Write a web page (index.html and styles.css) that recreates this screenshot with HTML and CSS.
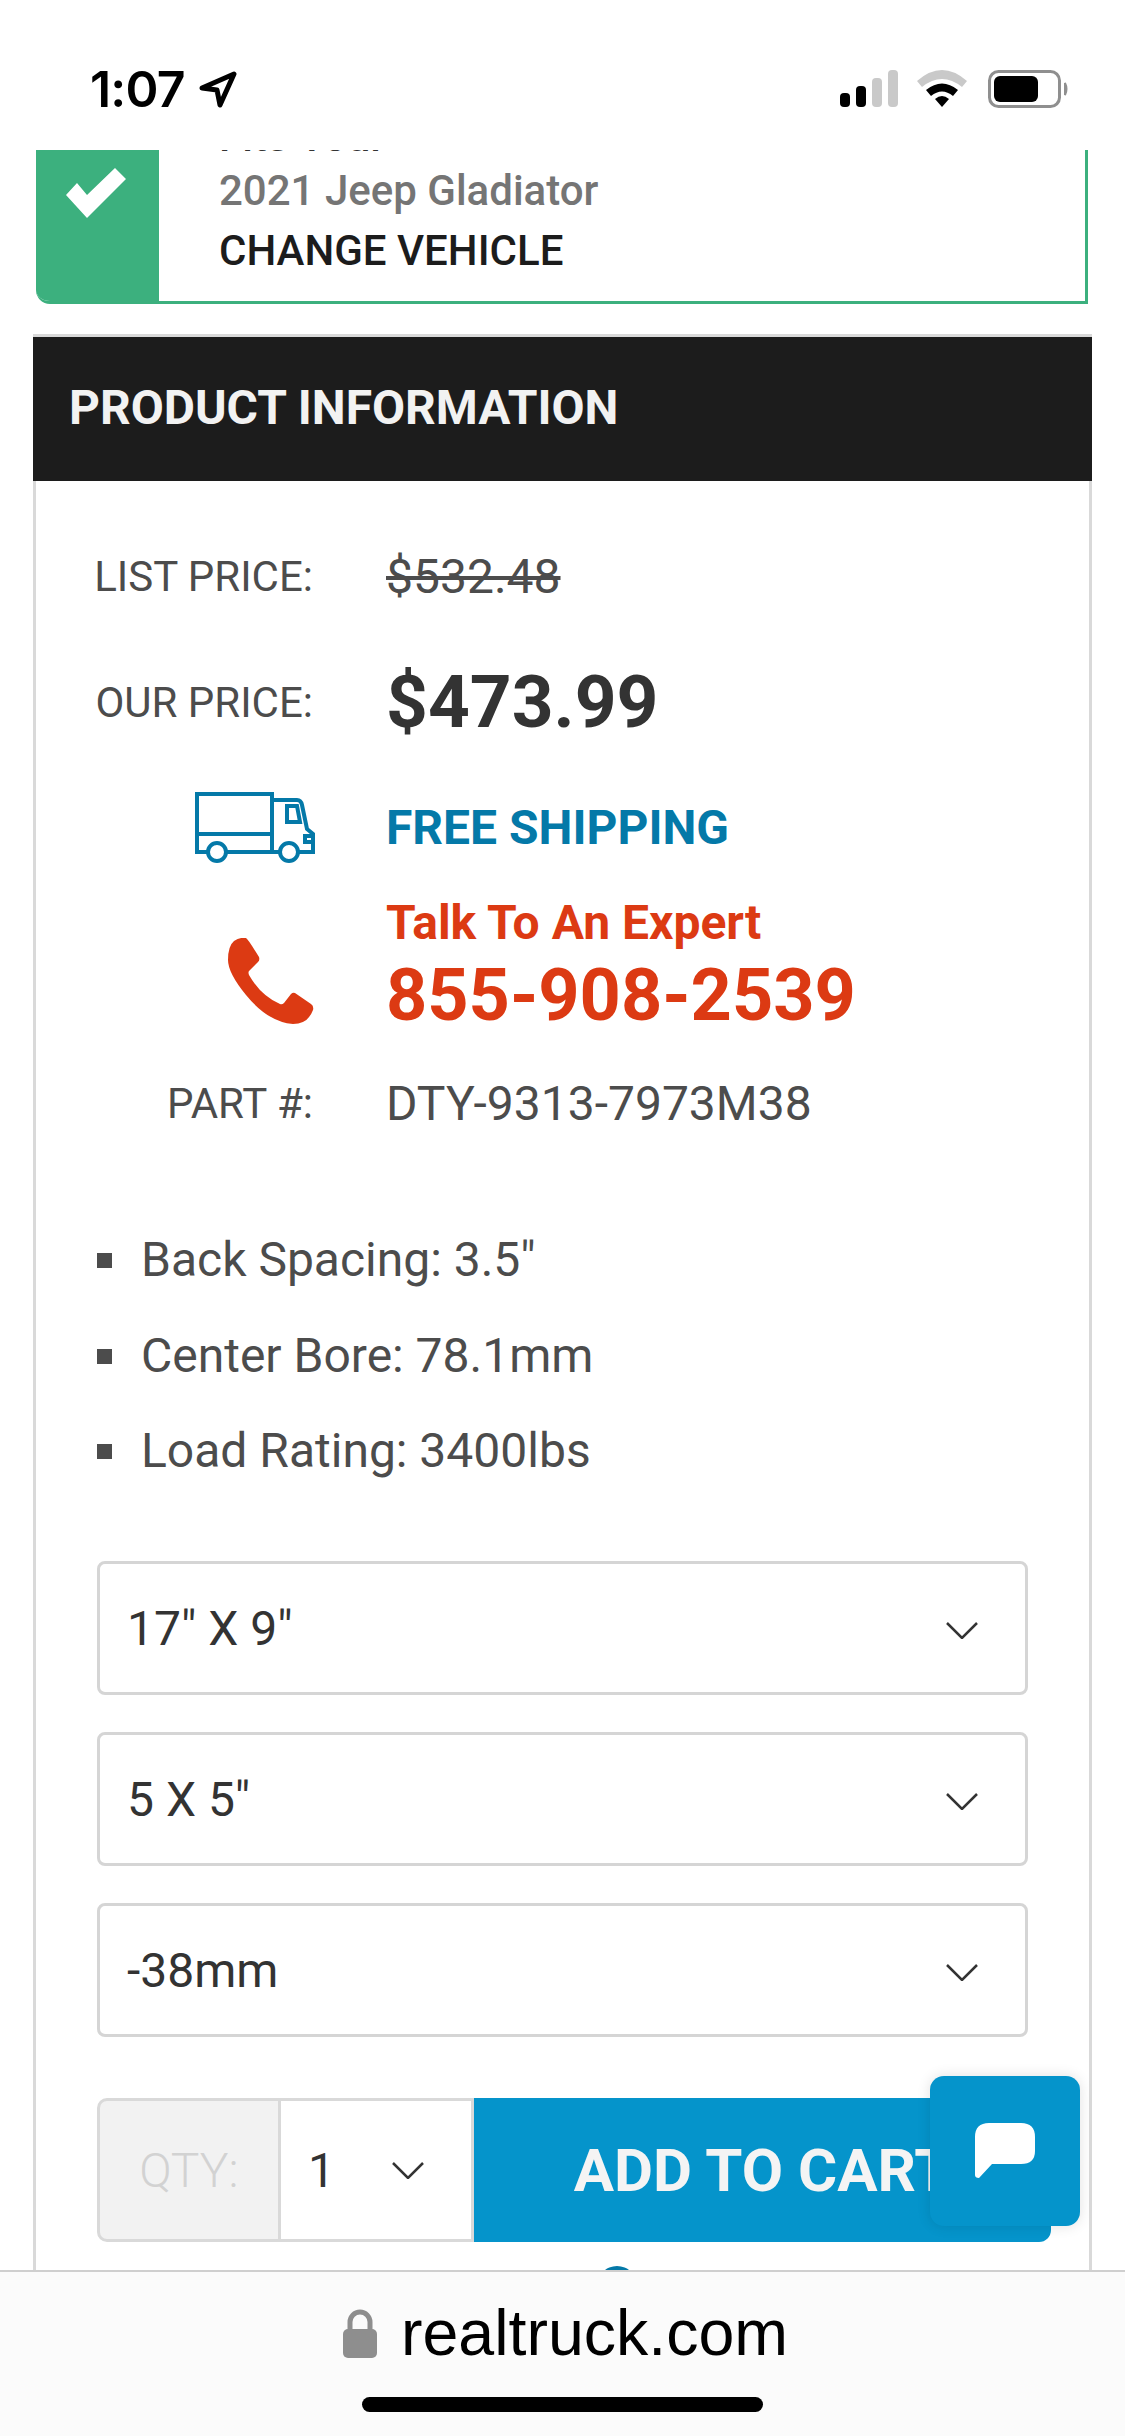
FILE: index.html
```html
<!DOCTYPE html>
<html lang="en">
<head>
<meta charset="utf-8">
<title>Product information</title>
<link rel="stylesheet" href="styles.css">
</head>
<body>
<div class="phone">
  <header class="status">
    <div class="status-left">
      <span class="time">1:07</span>
      <svg class="loc" viewBox="0 0 38 37"><path d="M3 17 L35 3 L21 34 L18 19 Z" fill="none" stroke="#000" stroke-width="5" stroke-linejoin="round"/></svg>
    </div>
    <div class="status-right">
      <svg class="signal" viewBox="0 0 58 37"><rect x="0" y="23" width="10" height="14" rx="4" fill="#000"/><rect x="16" y="16" width="10" height="21" rx="4" fill="#000"/><rect x="32" y="8" width="10" height="29" rx="4" fill="#c9c9c9"/><rect x="48" y="0" width="10" height="37" rx="4" fill="#c9c9c9"/></svg>
      <svg class="wifi" viewBox="0 0 50 37"><path d="M0 11 Q25 -11 50 11 L45 17 Q25 1 5 17Z" fill="#c9c9c9"/><path d="M9 20 Q25 7 41 20 L36 26 Q25 17 14 26Z" fill="#000"/><path d="M18 29 Q25 23 32 29 L25 37Z" fill="#000"/></svg>
      <svg class="battery" viewBox="0 0 80 38"><rect x="1.5" y="1.5" width="70" height="35" rx="9" fill="none" stroke="#8f8f8f" stroke-width="3"/><rect x="6" y="6" width="44" height="26" rx="6" fill="#000"/><path d="M77 13 Q80 19 77 25Z" fill="#8f8f8f" stroke="#8f8f8f" stroke-width="2"/></svg>
    </div>
  </header>

  <main class="viewport">
    <section class="vehicle">
      <div class="vehicle-flag">
        <svg class="check" viewBox="0 0 60 50"><path d="M0 27 L11 15 L21 27 L49 0 L60 11 L21 50 Z" fill="#fff"/></svg>
      </div>
      <div class="vehicle-body">
        <div class="fits">Fits Your</div>
        <div class="model">2021 Jeep Gladiator</div>
        <div class="change">CHANGE VEHICLE</div>
      </div>
    </section>

    <section class="panel">
      <h2 class="panel-title">PRODUCT INFORMATION</h2>
      <div class="panel-body">
        <div class="row row-list"><span class="label">LIST PRICE:</span><span class="list-price">$532.48</span></div>
        <div class="row row-our"><span class="label">OUR PRICE:</span><span class="our-price">$473.99</span></div>
        <div class="row row-free">
          <span class="label">
            <svg class="truck" viewBox="0 0 120 71" fill="none" stroke="#0479a8" stroke-width="4">
              <path d="M12 60 H2 V2 H77 V60 H32"/>
              <path d="M2 42 H77"/>
              <path d="M77 8 H102 Q106 8 107 13 L112 37 L118 42 V60 H104"/>
              <path d="M84 60 H77"/>
              <path d="M92 14 H102 L105 30 H92 Z"/>
              <path d="M118 44 H110 V50 H118"/>
              <circle cx="22" cy="60" r="9"/>
              <circle cx="94" cy="60" r="9"/>
            </svg>
          </span>
          <span class="free">FREE SHIPPING</span>
        </div>
        <div class="row row-expert">
          <span class="label">
            <svg class="phone-icon" viewBox="0 0 86 86"><path d="M6 3 Q12 -1 18 0 Q20 1 31 19 Q32 22 30 24 L21 33 Q20 34 21 37 Q33 58 52 66 Q54 67 56 65 L63 56 Q65 54 67 55 L83 66 Q86 68 85 72 Q80 86 65 86 Q40 84 18 57 Q0 35 0 22 Q0 8 6 3Z" fill="#dc3a13"/></svg>
          </span>
          <div class="expert">
            <div class="talk">Talk To An Expert</div>
            <div class="tel">855-908-2539</div>
          </div>
        </div>
        <div class="row row-part"><span class="label">PART #:</span><span class="part">DTY-9313-7973M38</span></div>

        <ul class="specs">
          <li>Back Spacing: 3.5"</li>
          <li>Center Bore: 78.1mm</li>
          <li>Load Rating: 3400lbs</li>
        </ul>

        <div class="selects">
          <div class="select"><span>17" X 9"</span><svg class="chev" viewBox="0 0 32 17"><path d="M1 1 L16 16 L31 1" fill="none" stroke="#333" stroke-width="2.5"/></svg></div>
          <div class="select"><span>5 X 5"</span><svg class="chev" viewBox="0 0 32 17"><path d="M1 1 L16 16 L31 1" fill="none" stroke="#333" stroke-width="2.5"/></svg></div>
          <div class="select"><span>-38mm</span><svg class="chev" viewBox="0 0 32 17"><path d="M1 1 L16 16 L31 1" fill="none" stroke="#333" stroke-width="2.5"/></svg></div>
        </div>

        <div class="cart">
          <div class="qty-label">QTY:</div>
          <div class="qty-select"><span>1</span><svg class="chev" viewBox="0 0 32 17"><path d="M1 1 L16 16 L31 1" fill="none" stroke="#333" stroke-width="2.5"/></svg></div>
          <div class="add">ADD TO CART</div>
        </div>
        <div class="peek"></div>
      </div>
    </section>
  </main>

  <footer class="safari">
    <div class="address">
      <svg class="lock" viewBox="0 0 34 50"><path d="M7 24 V14 a10 10 0 0 1 20 0 V24" fill="none" stroke="#8e8e8e" stroke-width="5"/><rect x="0" y="21" width="34" height="29" rx="5" fill="#8e8e8e"/></svg>
      <span class="domain">realtruck.com</span>
    </div>
    <div class="home"></div>
  </footer>

  <button class="chat" type="button" aria-label="Chat">
    <svg viewBox="0 0 60 55"><path d="M14 0 H46 Q60 0 60 14 V28 Q60 41 46 41 H17 L4 55 Q0 55 0 52 V14 Q0 0 14 0Z" fill="#fff"/></svg>
  </button>
</div>
</body>
</html>
```
FILE: styles.css
```css
* { box-sizing: border-box; }
html, body { margin: 0; padding: 0; background: #fff; }
body { font-family: Roboto, "Liberation Sans", sans-serif; }

.phone {
  position: relative;
  width: 1125px;
  height: 2436px;
  display: flex;
  flex-direction: column;
  overflow: hidden;
  background: #fff;
}

/* status bar */
.status {
  flex: 0 0 150px;
  display: flex;
  justify-content: space-between;
  align-items: flex-start;
  padding: 70px 57px 0 90px;
  background: #fff;
}
.status-left { display: flex; align-items: center; gap: 14px; height: 38px; }
.time { font-family: Inter, "Liberation Sans", sans-serif; font-size: 50px; font-weight: 600; line-height: 38px; color: #000; letter-spacing: -0.8px; }
.loc { width: 38px; height: 37px; display: block; }
.status-right { display: flex; align-items: flex-start; }
.signal { width: 58px; height: 37px; display: block; }
.wifi { width: 50px; height: 37px; display: block; margin-left: 19px; }
.battery { width: 80px; height: 38px; display: block; margin-left: 21px; }

/* page */
.viewport { flex: 1 1 auto; overflow: hidden; min-height: 0; }

.vehicle {
  display: flex;
  margin: -40px 37px 0 36px;
  height: 194px;
  border-right: 3px solid #3cb07e;
  border-bottom: 3px solid #3cb07e;
  border-bottom-left-radius: 14px;
  overflow: hidden;
  background: #fff;
}
.vehicle-flag { flex: 0 0 123px; background: #3cb07e; padding: 58px 0 0 30px; margin-bottom: -3px; }
.check { width: 60px; height: 50px; display: block; }
.vehicle-body { padding: 0 0 0 60px; }
.fits, .model { color: #757575; font-size: 42px; font-weight: 500; }
.fits { height: 51px; line-height: 54px; color: #333; }
.model { line-height: 60px; }
.change { color: #1c1c1c; font-size: 42px; font-weight: 500; line-height: 60px; }

.panel {
  margin: 30px 33px 0;
  border: 3px solid #d9d9d9;
  border-bottom: 0;
}
.panel-title {
  margin: 0 -3px;
  height: 144px;
  padding-left: 36px;
  background: #1c1c1c;
  color: #f2f2f2;
  font-size: 48px;
  font-weight: 700;
  line-height: 142px;
}
.panel-body { padding: 65px 61px 40px; }

.row { display: grid; grid-template-columns: 216px 1fr; grid-template-rows: 100%; column-gap: 73px; align-items: center; }
.label { display: flex; justify-content: flex-end; align-items: center; color: #4c4c4c; font-size: 42px; white-space: nowrap; }
.row-list { height: 60px; }
.list-price { color: #4c4c4c; font-size: 48px; text-decoration: line-through; }
.row-our { height: 90px; margin-top: 51px; }
.our-price { color: #333; font-size: 73px; font-weight: 700; line-height: 90px; }
.row-free { height: 60px; margin-top: 50px; }
.free { color: #0479a8; font-size: 48px; font-weight: 700; }
.truck { width: 120px; height: 71px; display: block; margin-right: -2px; }
.row-expert { margin-top: 36px; height: 146px; }
.phone-icon { width: 86px; height: 86px; display: block; margin-top: 30px; margin-right: -1px; }
.talk { color: #dc3a13; font-size: 48px; font-weight: 700; line-height: 60px; }
.tel { color: #dc3a13; font-size: 72px; font-weight: 700; line-height: 86px; }
.row-part { height: 60px; margin-top: 34px; }
.part { color: #4c4c4c; font-size: 48px; }

.specs { list-style: none; margin: 97px 0 0; padding: 0; }
.specs li {
  position: relative;
  padding-left: 44px;
  color: #4c4c4c;
  font-size: 48px;
  line-height: 60px;
  margin-top: 35.5px;
}
.specs li:first-child { margin-top: 0; }
.specs li::before {
  content: "";
  position: absolute;
  left: 0;
  top: 23px;
  width: 15px;
  height: 15px;
  background: #4c4c4c;
}

.selects { display: flex; flex-direction: column; gap: 37px; margin-top: 80px; }
.select {
  height: 134px;
  display: flex;
  align-items: center;
  justify-content: space-between;
  padding: 0 47px 0 27px;
  border: 3px solid #d5d5d5;
  border-radius: 8px;
  color: #333;
  font-size: 48px;
  background: #fff;
}
.select .chev { margin-top: 5px; }
.chev { width: 32px; height: 17px; display: block; flex: none; }

.cart { display: flex; height: 144px; margin-top: 61px; width: 954px; }
.qty-label {
  flex: 0 0 184px;
  display: flex;
  align-items: center;
  justify-content: center;
  background: #f2f2f2;
  border: 3px solid #d9d9d9;
  border-radius: 10px 0 0 10px;
  color: #d2d2d2;
  font-size: 48px;
  font-weight: 300;
}
.qty-select {
  flex: 0 0 193px;
  display: flex;
  align-items: center;
  justify-content: space-between;
  padding: 0 47px 0 27px;
  border: 3px solid #d9d9d9;
  border-left: 0;
  color: #333;
  font-size: 48px;
  background: #fff;
}
.add {
  flex: 1 1 auto;
  display: flex;
  align-items: center;
  justify-content: center;
  background: #0594cb;
  border-radius: 0 0 12px 0;
  color: #f4f4f4;
  font-size: 60px;
  font-weight: 700;
  white-space: nowrap;
}
.peek { width: 40px; height: 40px; margin: 24px 0 0 500px; border-radius: 50%; background: #0479a8; }

/* browser bar */
.safari {
  flex: 0 0 166px;
  position: relative;
  display: flex;
  flex-direction: column;
  align-items: center;
  background: #fbfbfb;
  border-top: 2px solid #cfcfcf;
}
.address { display: flex; align-items: center; gap: 24px; height: 50px; margin-top: 36px; padding-left: 6px; }
.lock { width: 34px; height: 50px; display: block; }
.domain { font-family: "Liberation Sans", Arial, sans-serif; font-size: 64.5px; line-height: 50px; color: #000; }
.home { width: 401px; height: 15px; margin: 39px 0 0 0; border-radius: 8px; background: #000; }

.chat {
  position: absolute;
  left: 930px;
  top: 2076px;
  width: 150px;
  height: 150px;
  padding: 0;
  display: flex;
  align-items: center;
  justify-content: center;
  border: 0;
  border-radius: 14px;
  background: #0594cb;
  box-shadow: 0 0 14px rgba(0, 0, 0, 0.12);
}
.chat svg { width: 60px; height: 55px; display: block; transform: translateY(-1px); }
```
